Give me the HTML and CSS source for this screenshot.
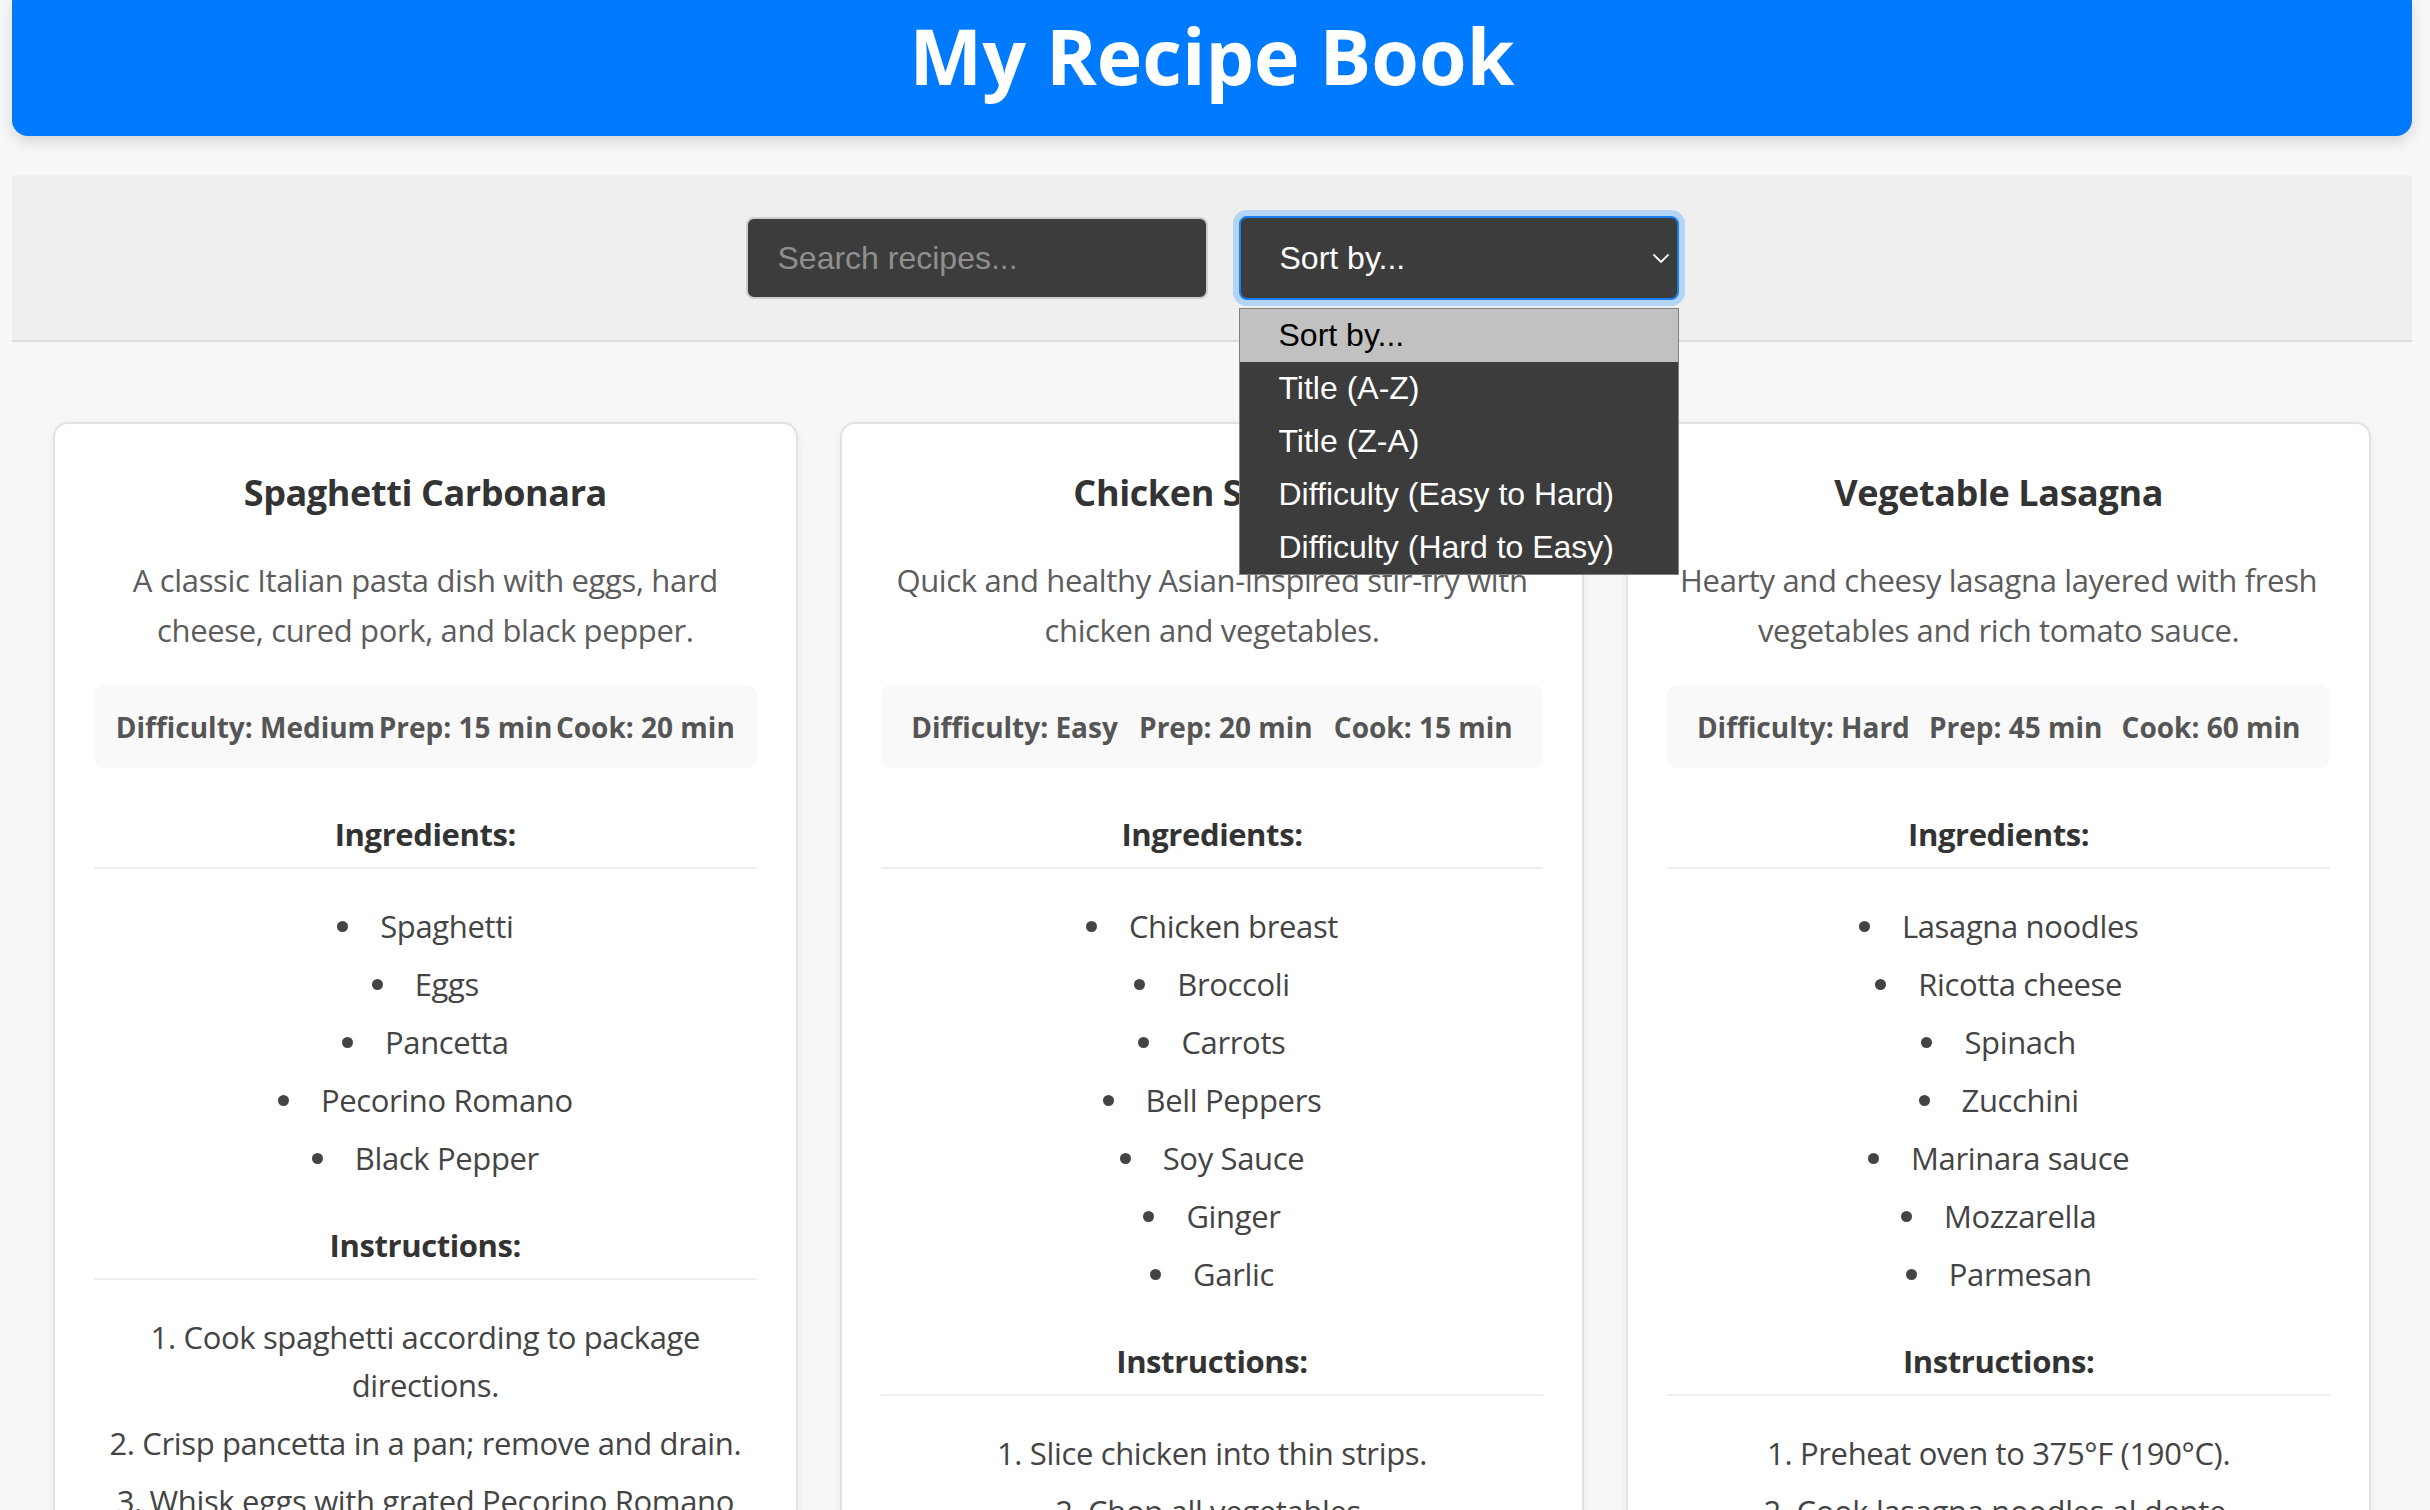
FILE: index.html
```html
<!DOCTYPE html>
<html lang="en">
<head>
<meta charset="utf-8">
<title>My Recipe Book</title>
<link rel="stylesheet" href="styles.css">
</head>
<body>
<div class="page">
  <header class="masthead">
    <h1>My Recipe Book</h1>
  </header>

  <section class="controls">
    <input class="search" type="text" placeholder="Search recipes...">
    <div class="sort">
      <span>Sort by...</span>
      <svg class="chevron" width="18" height="11" viewBox="0 0 18 11"><path d="M1.5 1.5 L9 9 L16.5 1.5" fill="none" stroke="#ffffff" stroke-width="1.8"/></svg>
      <ul class="menu">
        <li class="active">Sort by...</li>
        <li>Title (A-Z)</li>
        <li>Title (Z-A)</li>
        <li>Difficulty (Easy to Hard)</li>
        <li>Difficulty (Hard to Easy)</li>
      </ul>
    </div>
  </section>

  <main class="recipes">
    <article class="card">
      <h2>Spaghetti Carbonara</h2>
      <p class="desc">A classic Italian pasta dish with eggs, hard cheese, cured pork, and black pepper.</p>
      <div class="meta"><span>Difficulty: Medium</span><span>Prep: 15 min</span><span>Cook: 20 min</span></div>
      <h3>Ingredients:</h3>
      <ul>
        <li>Spaghetti</li>
        <li>Eggs</li>
        <li>Pancetta</li>
        <li>Pecorino Romano</li>
        <li>Black Pepper</li>
      </ul>
      <h3>Instructions:</h3>
      <ol>
        <li>Cook spaghetti according to package directions.</li>
        <li>Crisp pancetta in a pan; remove and drain.</li>
        <li>Whisk eggs with grated Pecorino Romano and black pepper.</li>
        <li>Toss hot pasta with pancetta and the egg mixture.</li>
        <li>Serve immediately with extra cheese.</li>
      </ol>
    </article>

    <article class="card">
      <h2>Chicken Stir-Fry</h2>
      <p class="desc">Quick and healthy Asian-inspired stir-fry with chicken and vegetables.</p>
      <div class="meta"><span>Difficulty: Easy</span><span>Prep: 20 min</span><span>Cook: 15 min</span></div>
      <h3>Ingredients:</h3>
      <ul>
        <li>Chicken breast</li>
        <li>Broccoli</li>
        <li>Carrots</li>
        <li>Bell Peppers</li>
        <li>Soy Sauce</li>
        <li>Ginger</li>
        <li>Garlic</li>
      </ul>
      <h3>Instructions:</h3>
      <ol>
        <li>Slice chicken into thin strips.</li>
        <li>Chop all vegetables.</li>
        <li>Stir-fry chicken until cooked through.</li>
        <li>Add vegetables, ginger and garlic.</li>
        <li>Finish with soy sauce and serve.</li>
      </ol>
    </article>

    <article class="card">
      <h2>Vegetable Lasagna</h2>
      <p class="desc">Hearty and cheesy lasagna layered with fresh vegetables and rich tomato sauce.</p>
      <div class="meta"><span>Difficulty: Hard</span><span>Prep: 45 min</span><span>Cook: 60 min</span></div>
      <h3>Ingredients:</h3>
      <ul>
        <li>Lasagna noodles</li>
        <li>Ricotta cheese</li>
        <li>Spinach</li>
        <li>Zucchini</li>
        <li>Marinara sauce</li>
        <li>Mozzarella</li>
        <li>Parmesan</li>
      </ul>
      <h3>Instructions:</h3>
      <ol>
        <li>Preheat oven to 375°F (190°C).</li>
        <li>Cook lasagna noodles al dente.</li>
        <li>Layer noodles, sauce, vegetables and cheeses.</li>
        <li>Bake covered for 45 minutes.</li>
        <li>Uncover and bake 15 more minutes.</li>
      </ol>
    </article>
  </main>
</div>
</body>
</html>
```

FILE: styles.css
```css
html, body {
  margin: 0;
  padding: 0;
}

body {
  background: #f7f7f7;
  font-family: "Open Sans", "Noto Sans", sans-serif;
  color: #333;
}

.page {
  padding: 0 18px 0 12px;
}

.masthead {
  background: #007bff;
  border-radius: 0 0 16px 16px;
  box-shadow: 0 6px 14px rgba(0, 0, 0, 0.13);
  padding: 10px 0 35px;
  text-align: center;
}

.masthead h1 {
  margin: 0;
  font-size: 77px;
  line-height: 91px;
  font-weight: 700;
  color: #ffffff;
}

.controls {
  margin-top: 39px;
  background: #efefef;
  border-bottom: 2px solid #dddddd;
  padding: 41px 0 40px;
  display: flex;
  justify-content: center;
  align-items: flex-start;
  gap: 31px;
}

.search {
  width: 462px;
  height: 82px;
  box-sizing: border-box;
  margin: 1px 0 0;
  background: #3c3c3c;
  border: 2px solid #cccccc;
  border-radius: 8px;
  padding: 0 30px;
  font-family: "Liberation Sans", Arial, sans-serif;
  font-size: 32px;
  color: #ffffff;
  outline: none;
}

.search::placeholder {
  color: #8f8f8f;
}

.sort {
  position: relative;
  width: 440px;
  height: 84px;
  box-sizing: border-box;
  background: #3c3c3c;
  border: 2px solid #1a7ff0;
  border-radius: 8px;
  box-shadow: 0 0 0 6px #b4d4f6;
  display: flex;
  align-items: center;
  justify-content: space-between;
  padding: 0 7px 0 39px;
  color: #ffffff;
  font-family: "Liberation Sans", Arial, sans-serif;
  font-size: 32px;
}

.chevron {
  display: block;
}

.menu {
  position: absolute;
  top: 90px;
  left: -2px;
  width: 440px;
  box-sizing: border-box;
  margin: 0;
  padding: 0;
  list-style: none;
  background: #3c3c3c;
  border: 1px solid #808080;
  z-index: 10;
}

.menu li {
  height: 53px;
  line-height: 53px;
  padding-left: 39px;
  font-size: 32px;
  color: #ffffff;
  white-space: nowrap;
}

.menu li.active {
  background: #c1c1c1;
  color: #000000;
}

.recipes {
  display: grid;
  grid-template-columns: repeat(3, 1fr);
  gap: 42px;
  padding: 80px 41px 0;
  align-items: stretch;
}

.card {
  background: #ffffff;
  border: 2px solid #e2e2e2;
  border-radius: 15px;
  padding: 39px;
  box-shadow: 0 3px 8px rgba(0, 0, 0, 0.06);
  text-align: center;
  min-width: 0;
}

.card h2 {
  margin: 4px 0 36px;
  font-size: 36px;
  line-height: 52px;
  letter-spacing: -0.4px;
  font-weight: 700;
  color: #333333;
}

.desc {
  margin: 0 0 30px;
  font-size: 31px;
  line-height: 50px;
  letter-spacing: -0.35px;
  color: #5c5c5c;
}

.meta {
  background: #f9f9f9;
  border-radius: 10px;
  padding: 21.5px 20px;
  display: flex;
  justify-content: space-around;
  font-size: 28px;
  line-height: 40px;
  font-weight: 700;
  color: #555555;
}

.meta span {
  white-space: nowrap;
}

.card h3 {
  margin: 43px 0 0;
  padding-bottom: 10px;
  border-bottom: 2px solid #eeeeee;
  font-size: 31px;
  line-height: 46px;
  letter-spacing: -0.4px;
  font-weight: 700;
  color: #333333;
}

.card ul,
.card ol {
  margin: 33px 0 0;
  padding: 0;
  list-style-position: inside;
  font-size: 31px;
  line-height: 48px;
  letter-spacing: -0.35px;
  color: #444444;
}

.card ul + h3 {
  margin-top: 40px;
}

.card li {
  margin-bottom: 10px;
}
```
